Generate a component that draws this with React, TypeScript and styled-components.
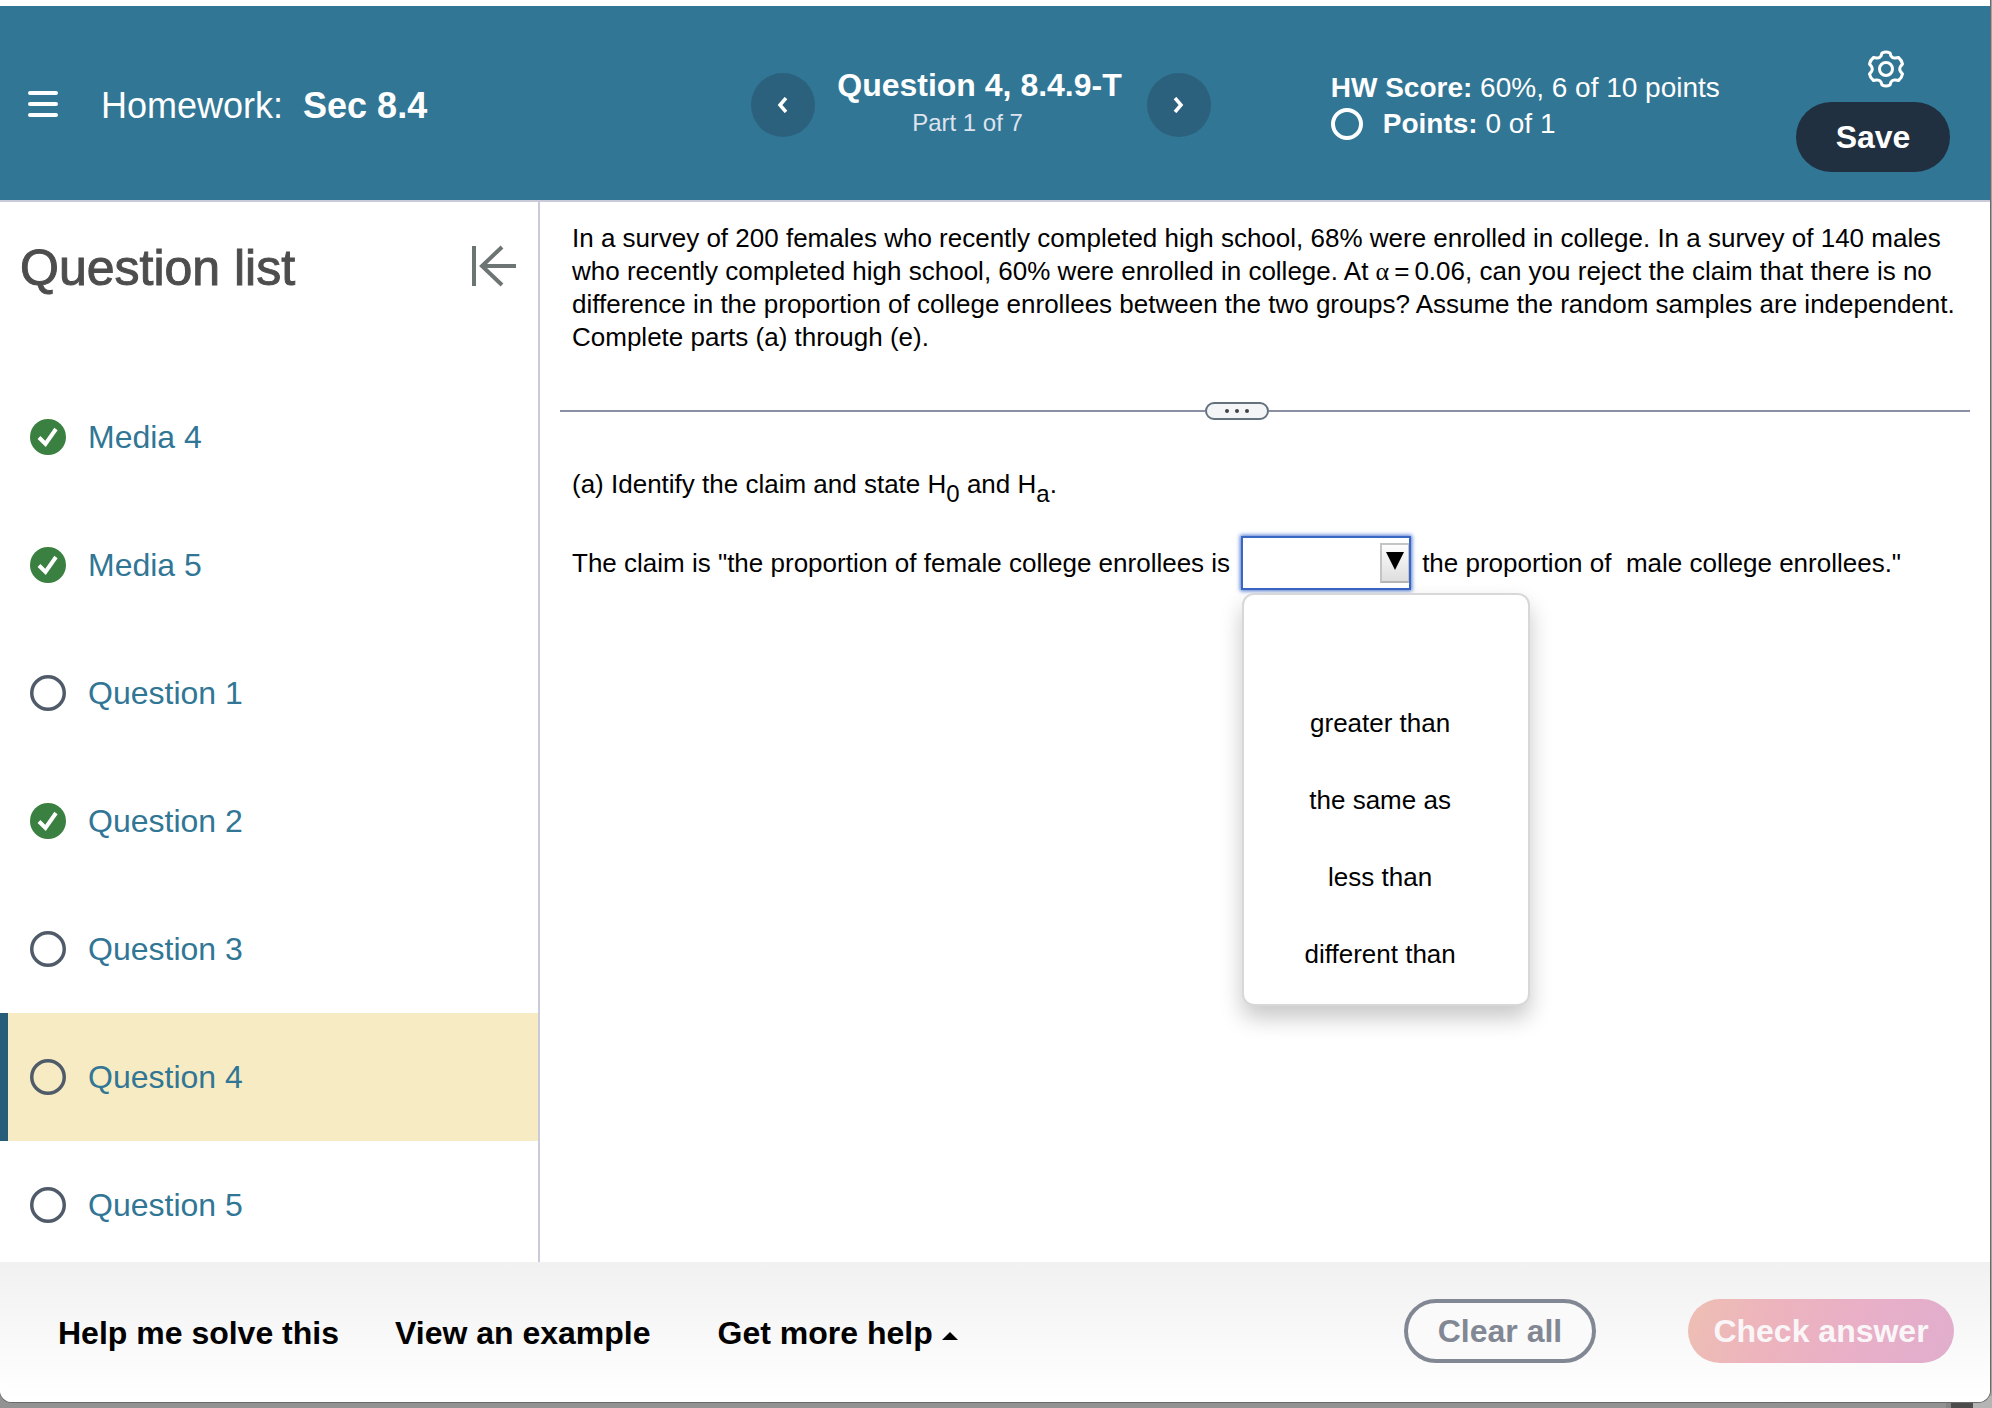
import React from "react";
import styled, { createGlobalStyle, css } from "styled-components";

const GlobalStyle = createGlobalStyle`
  *, *::before, *::after { box-sizing: border-box; }
  body {
    margin: 0;
    background: #929292;
    font-family: "Liberation Sans", Arial, Helvetica, sans-serif;
    color: #000;
  }
  button { font: inherit; border: 0; cursor: pointer; }
  h1, h2, p, ul { margin: 0; padding: 0; }
  ul { list-style: none; }
`;

const Desktop = styled.div`
  height: 100vh;
  display: flex;
  padding: 0 2px 6px 0;
  background:
    linear-gradient(
      to right,
      #929292 calc(100% - 46px),
      #858585 calc(100% - 46px) calc(100% - 41px),
      #4c4c4c calc(100% - 41px) calc(100% - 19px),
      #b4b4b4 calc(100% - 19px)
    )
    bottom / 100% 12px no-repeat,
    #a3a1a1;
`;

const Window = styled.div`
  flex: 1;
  min-width: 0;
  display: flex;
  flex-direction: column;
  padding-top: 6px;
  overflow: hidden;
  background: #fff;
  border-radius: 0 0 12px 12px;
  box-shadow: 0 0 0 1px #6a6a6a;
`;

const Header = styled.header`
  flex: none;
  height: 196px;
  display: grid;
  grid-template-columns: minmax(0, 1fr) auto minmax(0, 1fr);
  align-items: center;
  padding: 4px 40px 0 28px;
  background: #317695;
  border-bottom: 2px solid #c9cbd9;
  color: #fff;
`;

const Brand = styled.div`
  display: flex;
  align-items: center;
  gap: 42px;
`;

const IconButton = styled.button`
  display: flex;
  padding: 0;
  background: none;
  color: inherit;
`;

const AssignmentTitle = styled.h1`
  padding-top: 2px;
  font-size: 36px;
  line-height: 44px;
  font-weight: 400;
  white-space: pre;
`;

const QuestionNav = styled.nav`
  display: flex;
  align-items: center;
  gap: 22px;
  margin-right: 16px;
`;

const RoundButton = styled.button`
  width: 64px;
  height: 64px;
  display: flex;
  align-items: center;
  justify-content: center;
  padding: 0;
  border-radius: 50%;
  background: #2b617c;
  color: #fff;
`;

const QuestionHeading = styled.div`
  padding: 0 3px 2px 0;
`;

const QuestionName = styled.h2`
  font-size: 32px;
  line-height: 38px;
  font-weight: 700;
`;

const PartName = styled.p`
  padding-right: 24px;
  font-size: 24px;
  line-height: 38px;
  text-align: center;
  color: #dfe3ee;
`;

const HeaderEnd = styled.div`
  display: flex;
  align-items: center;
  justify-content: space-between;
  padding-left: 104px;
`;

const ScoreBlock = styled.div`
  padding-top: 2px;
  font-size: 28px;
  line-height: 36px;
`;

const PointsRow = styled.p`
  display: flex;
  align-items: center;
  gap: 20px;
  white-space: pre;
`;

const Ring = styled.span`
  width: 32px;
  height: 32px;
  border: 4px solid #fff;
  border-radius: 50%;
`;

const Actions = styled.div`
  display: flex;
  flex-direction: column;
  align-items: center;
  gap: 14px;
  padding-top: 12px;
`;

const GearSlot = styled.div`
  padding-left: 26px;
`;

const SaveButton = styled.button`
  width: 154px;
  height: 70px;
  border-radius: 35px;
  background: #203040;
  color: #fff;
  font-size: 32px;
  font-weight: 700;
`;

const Body = styled.div`
  flex: 1;
  min-height: 0;
  display: flex;
`;

const Sidebar = styled.aside`
  flex: none;
  width: 540px;
  overflow: hidden;
  border-right: 2px solid #c9cbdb;
`;

const SidebarHeader = styled.div`
  height: 171px;
  display: flex;
  align-items: flex-start;
  justify-content: space-between;
  padding: 37px 22px 0 20px;
`;

const SidebarTitle = styled.h2`
  font-size: 50px;
  line-height: 58px;
  font-weight: 400;
  color: #4d4d4d;
  -webkit-text-stroke: 1px #4d4d4d;
`;

const CollapseSlot = styled.div`
  padding-top: 6px;
  color: #6d7474;
`;

const QuestionLink = styled.a<{ $active?: boolean }>`
  height: 128px;
  display: flex;
  align-items: center;
  gap: 22px;
  padding-left: 22px;
  border-left: 8px solid transparent;
  font-size: 32px;
  line-height: 38px;
  text-decoration: none;
  color: #317695;
  ${(p) =>
    p.$active &&
    css`
      background: #f7ebc3;
      border-left-color: #265d78;
    `}
`;

const Content = styled.main`
  flex: 1;
  min-width: 0;
  padding: 20px 20px 0;
  font-size: 26px;
  line-height: 33px;
`;

const Prompt = styled.p`
  padding: 0 12px;
`;

const Greek = styled.span`
  font-family: "Liberation Serif", "Times New Roman", serif;
  line-height: 1;
`;

const Equals = styled.span`
  margin: 0 5px;
`;

const Divider = styled.div`
  display: flex;
  align-items: center;
  margin-top: 48px;
  &::before,
  &::after {
    content: "";
    flex: 1;
    height: 2px;
    background: #8b8fa3;
  }
  &::before { flex-grow: 645; }
  &::after { flex-grow: 702; }
`;

const DividerHandle = styled.button`
  width: 64px;
  height: 18px;
  display: flex;
  align-items: center;
  justify-content: center;
  gap: 6px;
  padding: 0;
  border: 2px solid #647280;
  border-radius: 9px;
  background: #f4f5f7;
`;

const Dot = styled.span`
  width: 4px;
  height: 4px;
  border-radius: 50%;
  background: #444;
`;

const PartPrompt = styled.p`
  padding: 48px 12px 0;
  sub {
    font-size: 24px;
    line-height: 0;
    vertical-align: -9px;
  }
`;

const Claim = styled.div`
  display: flex;
  align-items: center;
  padding: 35px 12px 0;
  white-space: pre;
`;

const Picker = styled.div`
  position: relative;
  margin: 0 11px;
`;

const PickerSelect = styled.select`
  display: block;
  width: 170px;
  height: 54px;
  appearance: none;
  padding: 0 34px 0 8px;
  font: inherit;
  background: #fff;
  border: 2px solid #3a66c4;
  border-radius: 0;
  outline: 0;
  box-shadow: 0 0 4px 1px #4f78d2;
`;

const PickerArrow = styled.span`
  position: absolute;
  right: 2px;
  top: 7px;
  width: 29px;
  height: 40px;
  display: flex;
  justify-content: center;
  padding-top: 7px;
  border: 2px solid #c4c4c4;
  border-right-width: 1px;
  border-bottom-color: #b4b4b4;
  background: linear-gradient(#fdfdfd, #dedede);
  pointer-events: none;
`;

const OptionList = styled.ul`
  position: absolute;
  left: 1px;
  top: 57px;
  width: 288px;
  padding: 13px 12px 11px 0;
  background: #fff;
  border: 2px solid #d8d8d8;
  border-radius: 12px;
  box-shadow: 0 12px 22px rgba(0, 0, 0, 0.22);
`;

const Option = styled.li`
  height: 77px;
  display: flex;
  align-items: center;
  justify-content: center;
`;

const Footer = styled.footer`
  flex: none;
  height: 140px;
  display: flex;
  align-items: center;
  justify-content: space-between;
  padding: 0 36px 2px 58px;
  background: linear-gradient(#f1f1f1, #fff);
  font-size: 32px;
  font-weight: 700;
`;

const HelpLinks = styled.div`
  display: flex;
  align-items: center;
  gap: 56px;
  padding-top: 4px;
`;

const TextButton = styled.button`
  padding: 0;
  line-height: 38px;
  background: none;
  color: #000;
`;

const MenuButton = styled(TextButton)`
  display: flex;
  align-items: center;
  gap: 9px;
  padding-left: 11px;
`;

const FooterButtons = styled.div`
  display: flex;
  gap: 92px;
`;

const PillButton = styled.button<{ $primary?: boolean }>`
  height: 64px;
  width: ${(p) => (p.$primary ? "266px" : "192px")};
  padding: 0;
  border-radius: 32px;
  ${(p) =>
    p.$primary
      ? css`
          background: linear-gradient(110deg, #eebfb3 0%, #edb4bd 30%, #e8afc8 65%, #e0aecd 100%);
          color: #faf6f8;
        `
      : css`
          background: #fafafa;
          border: 4px solid #828794;
          color: #828794;
        `}
`;

const MenuIcon = () => (
  <svg width="31" height="28" viewBox="0 0 31 28" stroke="currentColor" strokeWidth="4" strokeLinecap="round" aria-hidden="true">
    <path d="M2 2H28M2 13H28M2 24H28" />
  </svg>
);

const Chevron = ({ flip }: { flip?: boolean }) => (
  <svg width="12" height="16" viewBox="0 0 12 16" fill="none" stroke="currentColor" strokeWidth="3.500" aria-hidden="true">
    <path d={flip ? "M2 1L8 8L2 15" : "M9 1L3 8L9 15"} />
  </svg>
);

const GearIcon = () => (
  <svg width="36" height="38" viewBox="0 0 36 38" fill="none" stroke="currentColor" strokeWidth="3" strokeLinejoin="round" aria-hidden="true">
    <path d="M14 3 Q18 1 22 3 L23 6 Q24.500 8.500 27.500 8 L30.500 7.500 Q34 10.500 34.500 14 L32.500 16.500 Q31 19 32.500 21.500 L34.500 24 Q34 27.500 30.500 30.500 L27.500 30 Q24.500 29.500 23 32 L22 35 Q18 37 14 35 L13 32 Q11.500 29.500 8.500 30 L5.500 30.500 Q2 27.500 1.500 24 L3.500 21.500 Q5 19 3.500 16.500 L1.500 14 Q2 10.500 5.500 7.500 L8.500 8 Q11.500 8.500 13 6 Z" />
    <circle cx="18" cy="19" r="6.500" />
  </svg>
);

const CollapseIcon = () => (
  <svg width="46" height="42" viewBox="0 0 46 42" fill="none" stroke="currentColor" strokeWidth="4" aria-hidden="true">
    <path d="M4 1V41M46 21H12M32 2L12 21L32 40" />
  </svg>
);

const DoneIcon = () => (
  <svg width="36" height="36" viewBox="0 0 36 36" fill="none" role="img" aria-label="Completed">
    <circle cx="18" cy="18" r="18" fill="#3a8040" />
    <path d="M9 18.500L15.500 25L26 10" stroke="#fff" strokeWidth="4" />
  </svg>
);

const OpenIcon = () => (
  <svg width="36" height="36" viewBox="0 0 36 36" fill="none" role="img" aria-label="Not completed">
    <circle cx="18" cy="18" r="16.250" stroke="#505b69" strokeWidth="3.500" />
  </svg>
);

const ArrowDown = () => (
  <svg width="18" height="18" viewBox="0 0 18 18" aria-hidden="true">
    <path d="M0 0H18L9 18Z" />
  </svg>
);

const CaretUp = () => (
  <svg width="16" height="14" viewBox="0 0 16 14" aria-hidden="true">
    <path d="M0 14L8 6L16 14Z" />
  </svg>
);

const questions = [
  { label: "Media 4", done: true },
  { label: "Media 5", done: true },
  { label: "Question 1", done: false },
  { label: "Question 2", done: true },
  { label: "Question 3", done: false },
  { label: "Question 4", done: false, active: true },
  { label: "Question 5", done: false },
];

const options = ["", "greater than", "the same as", "less than", "different than"];

export default function App() {
  return (
    <Desktop>
      <GlobalStyle />
      <Window>
        <Header>
          <Brand>
            <IconButton aria-label="Menu"><MenuIcon /></IconButton>
            <AssignmentTitle>Homework:{"  "}<b>Sec 8.4</b></AssignmentTitle>
          </Brand>
          <QuestionNav aria-label="Question navigation">
            <RoundButton aria-label="Previous question"><Chevron /></RoundButton>
            <QuestionHeading>
              <QuestionName>Question 4, 8.4.9-T</QuestionName>
              <PartName>Part 1 of 7</PartName>
            </QuestionHeading>
            <RoundButton aria-label="Next question"><Chevron flip /></RoundButton>
          </QuestionNav>
          <HeaderEnd>
            <ScoreBlock>
              <p><b>HW Score:</b> 60%, 6 of 10 points</p>
              <PointsRow><Ring /><span><b>Points:</b> 0 of 1</span></PointsRow>
            </ScoreBlock>
            <Actions>
              <GearSlot><IconButton aria-label="Settings"><GearIcon /></IconButton></GearSlot>
              <SaveButton>Save</SaveButton>
            </Actions>
          </HeaderEnd>
        </Header>
        <Body>
          <Sidebar>
            <SidebarHeader>
              <SidebarTitle>Question list</SidebarTitle>
              <CollapseSlot><IconButton aria-label="Collapse question list"><CollapseIcon /></IconButton></CollapseSlot>
            </SidebarHeader>
            <ul>
              {questions.map((q) => (
                <li key={q.label}>
                  <QuestionLink href="#" $active={q.active}>
                    {q.done ? <DoneIcon /> : <OpenIcon />}
                    {q.label}
                  </QuestionLink>
                </li>
              ))}
            </ul>
          </Sidebar>
          <Content>
            <Prompt>
              In a survey of 200 females who recently completed high school, 68% were enrolled in college. In a survey of 140 males
              who recently completed high school, 60% were enrolled in college. At{" "}
              <Greek>α</Greek><Equals>=</Equals>0.06, can you reject the claim that there is no
              difference in the proportion of college enrollees between the two groups? Assume the random samples are independent.
              Complete parts (a) through (e).
            </Prompt>
            <Divider>
              <DividerHandle aria-label="Resize question panel"><Dot /><Dot /><Dot /></DividerHandle>
            </Divider>
            <PartPrompt>
              (a) Identify the claim and state H<sub>0</sub> and H<sub>a</sub>.
            </PartPrompt>
            <Claim>
              <label htmlFor="comparison">The claim is "the proportion of female college enrollees is</label>
              <Picker>
                <PickerSelect id="comparison" defaultValue="">
                  {options.map((o) => <option key={o} value={o}>{o}</option>)}
                </PickerSelect>
                <PickerArrow><ArrowDown /></PickerArrow>
                <OptionList role="listbox" aria-label="Comparison">
                  {options.map((o) => <Option key={o} role="option" aria-selected={o === ""}>{o}</Option>)}
                </OptionList>
              </Picker>
              <span>the proportion of{"  "}male college enrollees."</span>
            </Claim>
          </Content>
        </Body>
        <Footer>
          <HelpLinks>
            <TextButton>Help me solve this</TextButton>
            <TextButton>View an example</TextButton>
            <MenuButton>Get more help <CaretUp /></MenuButton>
          </HelpLinks>
          <FooterButtons>
            <PillButton>Clear all</PillButton>
            <PillButton $primary>Check answer</PillButton>
          </FooterButtons>
        </Footer>
      </Window>
    </Desktop>
  );
}
